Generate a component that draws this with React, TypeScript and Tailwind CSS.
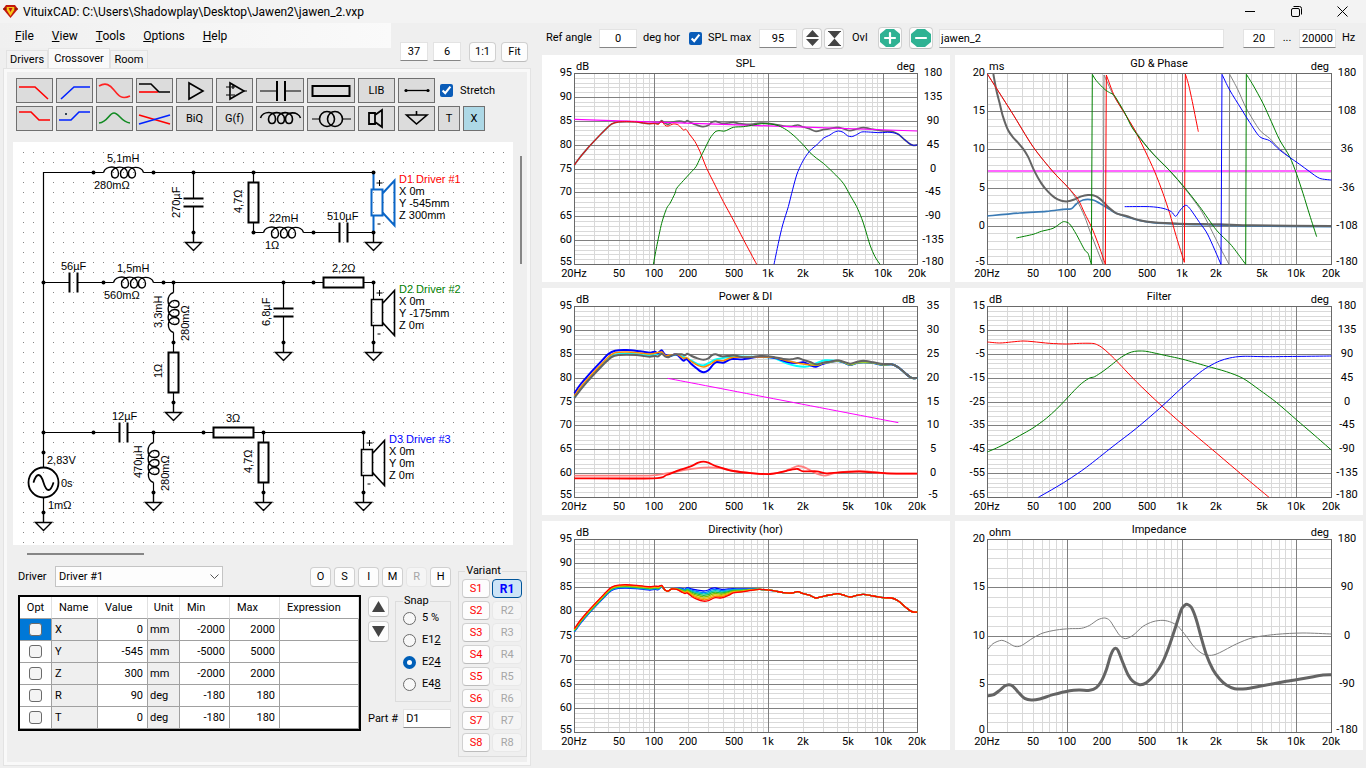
import React from "react";

type Pt = [number, number];

/* ------------------------------------------------------------------ */
/* Charts                                                              */
/* ------------------------------------------------------------------ */

function parse(points: string): Pt[] {
  return points
    .trim()
    .split(/\s+/)
    .map((p) => p.split(",").map(Number) as Pt);
}

/** Catmull-Rom spline through the sampled points. */
function smooth(points: string): string {
  const p = parse(points);
  let d = `M${p[0][0]} ${p[0][1]}`;
  for (let i = 0; i < p.length - 1; i++) {
    const a = p[Math.max(0, i - 1)];
    const b = p[i];
    const c = p[i + 1];
    const e = p[Math.min(p.length - 1, i + 2)];
    const k = 7;
    d += ` C${(b[0] + (c[0] - a[0]) / k).toFixed(1)} ${(b[1] + (c[1] - a[1]) / k).toFixed(1)} ${(c[0] - (e[0] - b[0]) / k).toFixed(1)} ${(c[1] - (e[1] - b[1]) / k).toFixed(1)} ${c[0]} ${c[1]}`;
  }
  return d;
}

interface Trace {
  color: string;
  width: number;
  segments: string[];
  shift?: number;
  wrap?: boolean;
}

interface ChartProps {
  title: string;
  leftUnit: string;
  rightUnit: string;
  left: string[];
  right: string[];
  plotWidth: number;
  plotHeight: number;
  traces: Trace[];
  traceTop: number;
}

const FREQS: [number, string][] = [
  [20, "20Hz"], [50, "50"], [100, "100"], [200, "200"], [500, "500"],
  [1000, "1k"], [2000, "2k"], [5000, "5k"], [10000, "10k"], [20000, "20k"],
];

const GRID_FREQS = [10, 100, 1000, 10000]
  .flatMap((d) => [1, 2, 3, 4, 5, 6, 7, 8, 9].map((m) => m * d))
  .filter((f) => f > 20 && f < 20000);

const isDecade = (f: number) => f === 100 || f === 1000 || f === 10000;

function Chart(c: ChartProps) {
  const x0 = 32;
  const y0 = 18;
  const x1 = x0 + c.plotWidth;
  const y1 = y0 + c.plotHeight;
  const fx = (f: number) => x0 + (c.plotWidth * Math.log10(f / 20)) / 3;
  const rows = c.left.length - 1;
  const fy = (i: number, n: number) => y0 + (c.plotHeight * i) / n;
  const snap = (v: number) => Math.round(v) + 0.5;
  const minor = Array.from({ length: rows * 5 + 1 }, (_, i) => i);
  const labelY = (i: number, n: number) => Math.round(fy(i, n)) + (i === n ? 1 : 3);
  return (
    <figure className="bg-white">
      <svg viewBox={`0 0 408 ${c.plotHeight + 36}`} className="block h-auto w-full font-[family-name:Roboto,'Liberation_Sans',sans-serif] text-[11px]" role="img" aria-label={c.title}>
        <g shapeRendering="crispEdges" strokeWidth="1">
          {minor.filter((i) => i % 5).map((i) => (
            <line key={i} x1={x0} x2={x1} y1={snap(fy(i, rows * 5))} y2={snap(fy(i, rows * 5))} stroke="#d9d9d9" />
          ))}
          {GRID_FREQS.filter((f) => !isDecade(f)).map((f) => (
            <line key={f} x1={snap(fx(f))} x2={snap(fx(f))} y1={y0} y2={y1} stroke="#d9d9d9" />
          ))}
          {minor.filter((i) => i % 5 === 0 && i > 0 && i < rows * 5).map((i) => (
            <line key={i} x1={x0} x2={x1} y1={snap(fy(i, rows * 5))} y2={snap(fy(i, rows * 5))} stroke="#808080" />
          ))}
          {GRID_FREQS.filter(isDecade).map((f) => (
            <line key={f} x1={snap(fx(f))} x2={snap(fx(f))} y1={y0} y2={y1} stroke="#808080" />
          ))}
          <rect x={x0 + 0.5} y={y0 + 0.5} width={c.plotWidth} height={c.plotHeight} fill="none" stroke="#696969" />
        </g>
        {/* Traces are sampled at three units per pixel. */}
        <g transform={`translate(-2 ${c.traceTop}) scale(0.33333)`} fill="none" strokeLinejoin="round">
          {c.traces.map((t, i) => (
            <g key={i} stroke={t.color} strokeWidth={t.width * 3} transform={`translate(0 ${t.shift ?? 0})`}>
              {t.segments.map((s, j) => (
                <path key={j} d={smooth(s)} />
              ))}
              {t.wrap &&
                t.segments.slice(1).map((s, j) => {
                  const prev = parse(t.segments[j]);
                  const end = prev[prev.length - 1];
                  const start = parse(s)[0];
                  return <path key={`w${j}`} d={`M${end[0]} ${end[1]}L${start[0]} ${start[1]}`} />;
                })}
            </g>
          ))}
        </g>
        <g fill="#000">
          <text x={x0 + c.plotWidth / 2} y="12" textAnchor="middle">{c.title}</text>
          <text x="34" y="15">{c.leftUnit}</text>
          <text x={x1 - 2} y="15" textAnchor="end">{c.rightUnit}</text>
          {c.left.map((l, i) => (
            <text key={i} x="30" y={labelY(i, rows)} textAnchor="end">{l}</text>
          ))}
          {c.right.map((l, i) => (
            <text key={i} x={x1 + 16} y={labelY(i, c.right.length - 1)} textAnchor="middle">{l}</text>
          ))}
          {FREQS.map(([f, l]) => (
            <text key={f} x={Math.round(fx(f))} y={y1 + 13} textAnchor="middle">{l}</text>
          ))}
        </g>
      </svg>
    </figure>
  );
}

const TAIL = "893,232 910,236 930,242 950,237 970,233 1000,238 1030,243 1055,244 1075,253 1095,270 1110,282 1120,286 1132,285";
const TOTAL = `103,345 120,322 140,298 160,276 180,255 200,235 215,222 235,216 260,215 290,216 310,219 330,221 345,219 355,220 365,212 375,220 385,223 395,217 410,214 425,214 435,217 442,212 455,219 470,225 490,230 505,226 515,217 527,214 545,220 565,219 580,217 600,221 620,223 640,222 660,219 700,222 730,228 755,229 773,225 790,231 810,237 828,244 850,239 870,236 ${TAIL}`;
const HEAD = "103,345 120,322 140,298 160,276 180,255 200,235 215,222 235,216 260,215 290,216 310,219 330,221";

const SPL: Trace[] = [
  { color: "#646464", width: 1.7, segments: [TOTAL] },
  { color: "#ff00ff", width: 1.2, segments: ["103,208 1132,243"] },
  { color: "#ff0000", width: 1, segments: [`${HEAD} 345,221 355,223 365,214 375,226 385,228 400,222 415,225 430,240 438,238 450,255 465,275 480,305 500,355 520,395 550,455 580,510 610,568 650,643`] },
  { color: "#007f00", width: 1, segments: ["340,643 350,590 365,520 380,475 390,460 405,430 410,415 430,392 450,370 468,350 480,325 495,295 510,265 525,246 537,242 555,243 580,232 610,230 640,225 665,221 690,222 715,227 740,240 765,260 790,285 810,308 830,325 850,340 880,368 910,400 930,435 950,470 965,505 975,535 990,585 1005,620 1020,643"] },
  { color: "#0000ff", width: 1, segments: ["702,643 715,580 728,525 745,470 755,430 770,375 785,340 800,315 815,297 830,285 850,265 870,255 880,248 895,243 910,247 922,257 935,260 950,254 965,246 985,246 1020,248 1050,247 1075,253 1095,270 1110,282 1120,286 1132,285"] },
];

const GD: Trace[] = [
  { color: "#ff66ff", width: 2, segments: ["105,363 1134,363"] },
  { color: "#3a7ab4", width: 1.7, segments: ["103,498 200,489 280,484 330,478 355,476 370,462 390,450 420,450 440,460 470,478 490,490 540,506 600,518 700,523 800,525 900,528 1135,530"] },
  { color: "#646464", width: 2, segments: ["121,72 130,120 140,160 150,200 165,240 180,262 195,278 210,296 225,320 245,365 265,400 285,425 305,443 325,452 345,454 365,448 385,439 405,435 420,436 435,442 450,455 470,475 490,490 520,498 560,511 600,517 680,521 800,523 900,526 1135,528"] },
  { color: "#808080", width: 1, wrap: true, segments: [
    "103,72 175,185 240,290 300,365 345,412 370,448 395,500 415,555 450,643",
    "453,75 480,133 515,190 550,247 600,312 650,362 695,415 740,475 765,520 800,590 828,643",
    "830,73 855,120 880,175 920,240 950,265 975,292 1010,322",
  ] },
  { color: "#ff0000", width: 1, wrap: true, segments: [
    "103,72 175,185 240,290 300,365 345,412 375,448 395,490 415,530 435,580 457,643",
    "460,75 485,140 515,190 545,240 575,300 605,365 630,430 650,490 670,560 694,637",
    "697,72 707,105 718,155 728,205 736,245",
  ] },
  { color: "#007f00", width: 1, wrap: true, segments: [
    "190,564 240,553 265,544 300,535 325,518 335,515 350,522 370,553 395,600 405,610 415,643",
    "418,73 430,92 455,118 470,128 485,138 515,188 540,237 590,300 650,362 695,413 740,470 790,540 830,580 850,605 878,643",
    "880,73 900,105 930,160 955,215 980,270 1010,320 1030,370 1050,430 1070,495 1091,560",
  ] },
  { color: "#0000ff", width: 1, wrap: true, segments: [
    "515,470 590,470 630,475 655,485 668,499 682,480 697,466 710,475 740,518 765,555 804,643",
    "807,73 830,120 865,177 890,217 920,260 950,272 980,300 1010,322 1040,343 1070,365 1100,385 1135,390",
  ] },
];

const P_TAIL = "893,228 910,232 930,240 950,234 970,232 1000,234 1030,240 1055,238 1075,247 1095,264 1110,276 1120,280 1132,279";

const POWER: Trace[] = [
  { color: "#ff8080", width: 1.8, segments: ["103,572 300,572 350,570 400,562 440,554 490,548 540,549 580,558 650,566 690,567 730,560 755,550 775,543 800,550 830,566 855,572 880,565 920,560 960,558 1040,565 1132,566"] },
  { color: "#ff0000", width: 1.8, segments: ["103,580 340,580 380,570 415,556 450,545 475,533 490,530 505,533 530,544 580,558 640,565 690,567 720,562 755,554 773,552 790,559 830,559 860,565 900,562 960,560 1040,565 1132,566"] },
  { color: "#ff00ff", width: 1, segments: ["383,280 1075,413"] },
  { color: "#00ffff", width: 2, segments: [`103,338 120,314 150,279 180,247 205,221 225,209 260,206 300,208 330,211 345,210 365,204 378,214 410,209 430,216 455,228 475,238 492,241 510,232 530,223 580,215 650,216 700,218 740,235 770,243 795,245 815,241 835,232 855,226 ${P_TAIL}`] },
  { color: "#0000ff", width: 2, segments: [`103,325 120,300 150,265 180,233 205,207 225,197 260,195 300,199 330,203 345,200 353,205 365,196 375,209 390,213 405,208 415,212 430,227 440,222 455,238 470,250 480,258 492,262 505,256 520,238 530,231 550,233 575,222 610,223 650,216 680,216 710,220 740,230 770,234 790,232 810,240 828,245 850,236 ${P_TAIL}`] },
  { color: "#ff8c00", width: 1.5, segments: [`103,334 120,309 150,274 180,242 205,216 225,203 260,201 300,204 330,207 345,205 365,201 378,212 410,208 430,220 440,218 455,230 475,242 492,246 510,238 530,226 550,227 580,217 650,216 700,217 740,227 790,237 828,241 850,234`] },
  { color: "#9acd32", width: 1.6, segments: [`810,236 828,240 850,234 870,232 ${P_TAIL}`] },
  { color: "#646464", width: 2, shift: -6, segments: [TOTAL] },
];

const DIR_END = "660,214 700,218 730,224 755,225 773,221 790,227 810,232 828,240 850,235 870,231 893,227 910,231 930,237 950,232 970,229 1000,234 1030,239 1055,240 1075,249 1095,266 1110,278 1120,282 1132,282";
const DIR_COLORS = ["#0000ff", "#0080ff", "#00c0c0", "#20c040", "#80c000", "#e0c000", "#ff8000", "#ff0000"];

const DIRECTIVITY: Trace[] = DIR_COLORS.map((color, i) => {
  const up = i * 1.4;
  const dip = i * 4.6;
  return {
    color,
    width: 1.3,
    segments: [
      `103,${342 - up} 120,${318 - up} 140,${294 - up} 160,${272 - up} 180,${251 - up} 200,${230 - up} 215,${217 - up} 235,${211 - up} 260,${210 - up} 290,${212 - up} 310,${214 - up} 330,${216 - up} 345,${214 - up} 355,${215 - up} 365,${207 - up / 2} 375,${216} 385,${219} 395,${213} 410,${211 + dip * 0.1} 425,${211 + dip * 0.35} 435,${214 + dip * 0.4} 442,${209 + dip * 0.5} 455,${213 + dip * 0.7} 470,${216 + dip * 0.85} 490,${219 + dip * 0.95} 505,${216 + dip} 515,${211 + dip} 527,${210 + dip * 0.9} 545,${214 + dip * 0.8} 565,${213 + dip * 0.6} 580,${212 + dip * 0.4} 600,${213 + dip * 0.3} 620,${213 + dip * 0.2} 640,${213 + dip * 0.1} ${DIR_END}`,
    ],
  };
});

const FILTER: Trace[] = [
  { color: "#ff0000", width: 1, segments: ["103,171 140,174 175,171 210,168 240,170 290,175 340,177 380,175 415,175 430,178 450,190 485,222 550,290 620,357 687,417 790,504 870,572 948,637"] },
  { color: "#007f00", width: 1, segments: ["103,501 150,480 200,452 240,429 280,400 310,373 340,342 370,310 390,292 410,279 425,275 450,259 475,240 500,220 525,205 545,199 565,198 585,200 640,212 690,223 760,243 820,260 870,280 920,315 970,352 1030,404 1080,447 1135,495"] },
  { color: "#0000ff", width: 1, segments: ["256,637 300,612 343,586 400,547 480,484 550,430 620,370 687,308 740,263 770,243 800,228 830,219 870,214 950,215 1135,213"] },
];

const IMPEDANCE: Trace[] = [
  { color: "#808080", width: 1, segments: ["103,396 120,377 145,367 165,374 185,385 205,383 240,360 270,345 310,336 350,332 385,331 410,322 435,305 455,300 470,307 485,330 500,352 517,362 540,352 570,325 600,311 630,307 655,313 675,325 700,355 725,388 750,408 775,412 800,404 850,378 900,359 970,349 1050,345 1135,348"] },
  { color: "#646464", width: 3, segments: ["103,533 120,531 140,517 155,504 168,500 180,505 200,527 215,541 235,546 260,543 300,530 350,518 380,516 410,517 430,509 445,490 460,455 472,415 480,397 487,391 495,397 510,435 525,470 540,490 560,500 580,494 605,470 630,430 650,380 670,320 685,275 695,262 703,259 715,268 730,305 745,360 760,410 780,455 800,483 820,501 845,512 880,512 920,505 1000,490 1060,480 1110,471 1135,470"] },
];

const DB_AXIS = ["95", "90", "85", "80", "75", "70", "65", "60", "55"];
const DEG_AXIS = ["180", "135", "90", "45", "0", "-45", "-90", "-135", "-180"];

function Charts() {
  return (
    <div className="grid grid-cols-2 gap-x-[5px] gap-y-1.5">
      <Chart title="SPL" leftUnit="dB" rightUnit="deg" left={DB_AXIS} right={DEG_AXIS} plotWidth={343} plotHeight={191} traces={SPL} traceTop={-5} />
      <Chart title="GD & Phase" leftUnit="ms" rightUnit="deg" left={["20", "15", "10", "5", "0", "-5"]} right={["180", "108", "36", "-36", "-108", "-180"]} plotWidth={344} plotHeight={191} traces={GD} traceTop={-5} />
      <Chart title="Power & DI" leftUnit="dB" rightUnit="dB" left={DB_AXIS} right={["35", "30", "25", "20", "15", "10", "5", "0", "-5"]} plotWidth={343} plotHeight={191} traces={POWER} traceTop={-3} />
      <Chart title="Filter" leftUnit="dB" rightUnit="deg" left={["15", "5", "-5", "-15", "-25", "-35", "-45", "-55", "-65"]} right={DEG_AXIS} plotWidth={344} plotHeight={191} traces={FILTER} traceTop={-3} />
      <Chart title="Directivity (hor)" leftUnit="dB" rightUnit="" left={DB_AXIS} right={[]} plotWidth={343} plotHeight={193} traces={DIRECTIVITY} traceTop={-3} />
      <Chart title="Impedance" leftUnit="ohm" rightUnit="deg" left={["20", "15", "10", "5", "0"]} right={["180", "90", "0", "-90", "-180"]} plotWidth={344} plotHeight={193} traces={IMPEDANCE} traceTop={-3} />
    </div>
  );
}

/* ------------------------------------------------------------------ */
/* Schematic                                                           */
/* ------------------------------------------------------------------ */

const COIL = "M-20 0C-18 -7 -5 -8 -5 1C-5 7 -12 7 -12 1C-12 -7 4 -8 4 1C4 7 -3 7 -3 1C-3 -7 12 -8 12 1C12 7 5 7 5 1C5 -7 18 -7 20 0";

function Coil({ x, y, vertical }: { x: number; y: number; vertical?: boolean }) {
  return (
    <g transform={`translate(${x} ${y})${vertical ? " rotate(90) scale(1 -1) translate(0 0)" : ""}`}>
      <path d={vertical ? "M-30 0H-20M20 0H30" : "M-30 0H-20M20 0H30"} />
      <path d={COIL} strokeWidth="1.4" transform={vertical ? "scale(1 1)" : undefined} />
    </g>
  );
}

function Cap({ x, y, vertical, lead = 30 }: { x: number; y: number; vertical?: boolean; lead?: number }) {
  return (
    <g transform={`translate(${x} ${y})${vertical ? " rotate(90)" : ""}`}>
      <path d={`M${-lead} 0H-4M4 0H${lead}`} />
      <path d="M-4 -10V10M4 -10V10" strokeWidth="2" />
    </g>
  );
}

function Res({ x, y, vertical }: { x: number; y: number; vertical?: boolean }) {
  return (
    <g transform={`translate(${x} ${y})${vertical ? " rotate(90)" : ""}`}>
      <path d="M-30 0H-20M20 0H30" />
      <rect x="-20" y="-5" width="40" height="10" strokeWidth="2" />
    </g>
  );
}

function Ground({ x, y }: { x: number; y: number }) {
  return <path d={`M${x} ${y}v10M${x - 8} ${y + 10}h16l-8 8z`} strokeWidth="1.4" />;
}

function Speaker({ x, y, color, selected }: { x: number; y: number; color: string; selected?: boolean }) {
  return (
    <g stroke={color} transform={`translate(${x} ${y})`}>
      <path d="M0 0V17M0 43V60" strokeWidth={selected ? 2 : 1.2} />
      <path d="M-2 17H9V43H-2ZM9 21L21 8V53L9 40" strokeWidth={selected ? 2 : 1.6} />
      <path d="M3 10.5H9M6 7.5V13.5M4 51.5H7" stroke="#000" strokeWidth="1" />
    </g>
  );
}

const DOTS: Pt[] = [
  [93, 172], [153, 172], [193, 172], [253, 172], [373, 172], [193, 232], [253, 232], [313, 232], [373, 232],
  [43, 282], [103, 282], [163, 282], [173, 282], [283, 282], [313, 282], [373, 282], [173, 342], [283, 342], [373, 342], [173, 402],
  [43, 432], [93, 432], [153, 432], [203, 432], [263, 432], [363, 432], [43, 452], [43, 512], [153, 492], [263, 492], [363, 492],
];

const LABELS: [number, number, string][] = [
  [107, 162, "5,1mH"], [94, 189, "280mΩ"], [269, 222, "22mH"], [265, 249, "1Ω"], [327, 220, "510µF"],
  [61, 270, "56µF"], [117, 272, "1,5mH"], [104, 299, "560mΩ"], [332, 272, "2,2Ω"],
  [112, 420, "12µF"], [226, 422, "3Ω"], [47, 464, "2,83V"], [61, 487, "0s"], [48, 509, "1mΩ"],
];

const VLABELS: [number, number, string][] = [
  [180, 218, "270µF"], [242, 213, "4,7Ω"], [162, 328, "3,3mH"], [189, 341, "280mΩ"], [162, 378, "1Ω"],
  [270, 326, "6,8µF"], [142, 478, "470µH"], [169, 491, "280mΩ"], [252, 473, "4,7Ω"],
];

const DRIVERS: { x: number; y: number; color: string; name: string; lines: string[] }[] = [
  { x: 399, y: 183, color: "#ff0000", name: "D1 Driver #1", lines: ["X 0m", "Y -545mm", "Z 300mm"] },
  { x: 399, y: 293, color: "#007f00", name: "D2 Driver #2", lines: ["X 0m", "Y -175mm", "Z 0m"] },
  { x: 389, y: 443, color: "#0000ff", name: "D3 Driver #3", lines: ["X 0m", "Y 0m", "Z 0m"] },
];

function Schematic() {
  return (
    <svg viewBox="13 142 500 403" className="block h-auto min-w-0 flex-1 bg-white font-[family-name:'Liberation_Sans',Arial,sans-serif] text-[11px]" role="img" aria-label="Crossover schematic">
      <defs>
        <pattern id="dots" x="13" y="142" width="10" height="10" patternUnits="userSpaceOnUse">
          <rect x="0" y="0" width="1" height="1" fill="#858585" />
        </pattern>
      </defs>
      <rect x="23" y="152" width="484" height="391" fill="url(#dots)" />
      <g transform="translate(0.5 0.5)" fill="none" stroke="#000" strokeWidth="1.2">
        <path d="M93 172H43V467M153 172H373M43 282H53M163 282H313M43 432H93M153 432H203M263 432H363M43 497V512" />
        <Coil x={123} y={172} />
        <Cap x={193} y={202} vertical />
        <Ground x={193} y={232} />
        <Res x={253} y={202} vertical />
        <Coil x={283} y={232} />
        <Cap x={343} y={232} />
        <Ground x={373} y={232} />
        <Speaker x={373} y={172} color="#0a66c8" selected />

        <Cap x={73} y={282} />
        <Coil x={133} y={282} />
        <Coil x={173} y={312} vertical />
        <Res x={173} y={372} vertical />
        <Ground x={173} y={402} />
        <Cap x={283} y={312} vertical />
        <Ground x={283} y={342} />
        <Res x={343} y={282} />
        <Speaker x={373} y={282} color="#000" />
        <Ground x={373} y={342} />

        <Cap x={123} y={432} />
        <Coil x={153} y={462} vertical />
        <Ground x={153} y={492} />
        <Res x={233} y={432} />
        <Res x={263} y={462} vertical />
        <Ground x={263} y={492} />
        <Speaker x={363} y={432} color="#000" />
        <Ground x={363} y={492} />

        <circle cx="43" cy="482" r="15" strokeWidth="1.8" />
        <path d="M33 482C36 472 40 472 43 482S50 492 53 482" strokeWidth="1.8" />
        <Ground x={43} y={512} />
      </g>
      {DOTS.map(([x, y]) => (
        <circle key={`${x}-${y}`} cx={x + 0.5} cy={y + 0.5} r="2" />
      ))}
      {LABELS.map(([x, y, t]) => (
        <text key={`${x}-${y}`} x={x} y={y}>{t}</text>
      ))}
      {VLABELS.map(([x, y, t]) => (
        <text key={`${x}-${y}`} transform={`translate(${x} ${y}) rotate(-90)`}>{t}</text>
      ))}
      {DRIVERS.map((d) => (
        <g key={d.name}>
          <text x={d.x} y={d.y} fill={d.color}>{d.name}</text>
          {d.lines.map((l, i) => (
            <text key={l} x={d.x} y={d.y + 12 * (i + 1)}>{l}</text>
          ))}
        </g>
      ))}
    </svg>
  );
}

/* ------------------------------------------------------------------ */
/* Toolbar of parts                                                    */
/* ------------------------------------------------------------------ */

function Tool({ label, wide, children }: { label: string; wide?: boolean; children: React.ReactNode }) {
  return (
    <button type="button" aria-label={label} className={`flex h-[25px] items-center justify-center border border-[#707070] bg-[#dcdcdc] ${wide ? "w-12" : "w-[37px]"}`}>
      {children}
    </button>
  );
}

function Icon({ w = 35, children }: { w?: number; children: React.ReactNode }) {
  return (
    <svg width={w} height="23" viewBox={`0 0 ${w} 23`} fill="none" stroke="#000" strokeWidth="1.6">
      {children}
    </svg>
  );
}

function PartsToolbar() {
  return (
    <div className="flex flex-col gap-[3px] pt-1.5 pl-[9px]">
      <div className="flex gap-[3px]">
        <Tool label="Low pass"><Icon><path d="M2 8H18L31 20" stroke="#f00" /></Icon></Tool>
        <Tool label="High pass"><Icon><path d="M4 20L17 8H33" stroke="#02f" /></Icon></Tool>
        <Tool label="Shelf"><Icon><path d="M2 7C9 3 13 6 17 11S24 21 33 17" stroke="#f22" /></Icon></Tool>
        <Tool label="Low shelf"><Icon><path d="M2 13H21" stroke="#f00" /><path d="M2 5H14L22 13H33" /></Icon></Tool>
        <Tool label="Buffer"><Icon><path d="M12 4V20L26 12Z" /></Icon></Tool>
        <Tool label="Operational amplifier"><Icon><path d="M13 4V20L27 12Z" /><path d="M9 8H13M9 16H13M27 12H30M14 8H18M16 6V10M14 16H18" strokeWidth="1.2" /></Icon></Tool>
        <Tool wide label="Capacitor"><Icon w={46}><path d="M3 12H20M28 12H44" strokeWidth="1.2" /><path d="M20 2V22M28 2V22" strokeWidth="2" /></Icon></Tool>
        <Tool wide label="Resistor"><Icon w={46}><rect x="4.5" y="7" width="37" height="10" strokeWidth="2" /></Icon></Tool>
        <Tool label="Library">LIB</Tool>
        <Tool label="Wire"><Icon><path d="M7 11.5H29" strokeWidth="1.3" /><circle cx="7" cy="11.5" r="1.6" fill="#000" stroke="none" /><circle cx="29" cy="11.5" r="1.6" fill="#000" stroke="none" /></Icon></Tool>
        <label className="ml-0.5 flex items-center gap-[7px]">
          <input type="checkbox" defaultChecked className="size-[13px] accent-[#0a5cb8]" />
          Stretch
        </label>
      </div>
      <div className="flex gap-[3px]">
        <Tool label="Attenuator shelf"><Icon><path d="M2 5H14L22 13H33" stroke="#f00" /></Icon></Tool>
        <Tool label="High shelf"><Icon><path d="M2 13H14L22 5H33" stroke="#02f" /><rect x="8" y="6" width="2" height="2" fill="#345" stroke="none" /></Icon></Tool>
        <Tool label="Peak"><Icon><path d="M2 16C11 15 12 6 17 6S24 15 33 16" stroke="#118a22" /></Icon></Tool>
        <Tool label="Crossing"><Icon><path d="M2 8L33 17" stroke="#f00" /><path d="M2 17L33 8" stroke="#02f" /></Icon></Tool>
        <Tool label="Biquad">BiQ</Tool>
        <Tool label="Transfer function">G(f)</Tool>
        <Tool wide label="Inductor"><Icon w={46}><g transform="translate(23.5 11)"><path d={COIL} /></g></Icon></Tool>
        <Tool wide label="Transformer"><Icon w={46}><circle cx="19" cy="12" r="7.5" /><circle cx="27" cy="12" r="7.5" /><path d="M4 12H11.500M34.500 12H43" strokeWidth="1.2" /></Icon></Tool>
        <Tool label="Speaker"><Icon><path d="M10 6H16V17H10ZM16 8L23 3V20L16 15" strokeWidth="1.8" /></Icon></Tool>
        <Tool label="Ground"><Icon><path d="M17.500 4V8M7.500 8H28L17.500 17Z" /></Icon></Tool>
        <button type="button" className="h-[25px] w-[22px] border border-[#707070] bg-[#dcdcdc]">T</button>
        <button type="button" className="h-[25px] w-[22px] border border-[#707070] bg-[#add8e6]">X</button>
      </div>
    </div>
  );
}

/* ------------------------------------------------------------------ */
/* Part editor                                                         */
/* ------------------------------------------------------------------ */

const btn = "rounded-[4px] border border-[#d0d0d0] border-b-[#bcbcbc] bg-[#fdfdfd]";
const field = "border border-[#e3e3e3] border-b-[#868686] bg-white outline-none";

const ROWS = [
  ["X", "0", "mm", "-2000", "2000"],
  ["Y", "-545", "mm", "-5000", "5000"],
  ["Z", "300", "mm", "-2000", "2000"],
  ["R", "90", "deg", "-180", "180"],
  ["T", "0", "deg", "-180", "180"],
];

const cell = "h-[22px] border-r border-b border-[#a0a0a0] p-0";
const head = "h-[22px] border-r border-b border-r-[#e0e0e0] border-b-[#a0a0a0] p-0 font-normal";

function ParamTable() {
  return (
    <table className="w-[343px] table-fixed border-separate border-spacing-0 border-2 border-black bg-white">
      <colgroup>
        <col className="w-8" /><col className="w-[46px]" /><col className="w-[50px]" /><col className="w-8" />
        <col className="w-[50px]" /><col className="w-[50px]" /><col />
      </colgroup>
      <thead>
        <tr>
          <th className={head}>Opt</th>
          <th className={`${head} pl-[7px] text-left`}>Name</th>
          <th className={`${head} pl-[7px] text-left`}>Value</th>
          <th className={head}>Unit</th>
          <th className={`${head} pl-[7px] text-left`}>Min</th>
          <th className={`${head} pl-[7px] text-left`}>Max</th>
          <th className={`${head} pl-[7px] text-left`}>Expression</th>
        </tr>
      </thead>
      <tbody>
        {ROWS.map((r, i) => (
          <tr key={r[0]}>
            <td className={`${cell} ${i === 0 ? "bg-[#0078d7]" : ""}`}>
              <input type="checkbox" aria-label={`Optimize ${r[0]}`} className="mx-auto block size-[13px] appearance-none rounded-[3px] border border-[#6b6b6b] bg-[#f4f4f4]" />
            </td>
            <td className={`${cell} bg-[#efefef] pl-[3px]`}>{r[0]}</td>
            <td className={`${cell} pr-1 text-right`}>{r[1]}</td>
            <td className={`${cell} bg-[#efefef] pl-0.5`}>{r[2]}</td>
            <td className={`${cell} pr-1 text-right`}>{r[3]}</td>
            <td className={`${cell} pr-1 text-right`}>{r[4]}</td>
            <td className={cell}></td>
          </tr>
        ))}
      </tbody>
    </table>
  );
}

const SNAPS: [string, string][] = [["5 %", ""], ["E1", "2"], ["E2", "4"], ["E4", "8"]];

function Editor() {
  return (
    <div className="flex items-start pl-[11px]">
      <div className="flex w-[434px] flex-col gap-2 pt-1.5">
        <div className="flex items-center">
          <label htmlFor="driver" className="w-[37px]">Driver</label>
          <div className="relative">
            <select id="driver" className="h-[21px] w-[168px] appearance-none border border-[#c4c4c4] bg-[#fdfdfd] pl-[3px]">
              <option>Driver #1</option>
            </select>
            <svg className="pointer-events-none absolute top-2 right-1" width="9" height="6" viewBox="0 0 9 6" fill="none" stroke="#555"><path d="M.5 .5L4.500 4.500L8.500 .5" /></svg>
          </div>
          <div className="ml-auto flex gap-[3px]">
            {["O", "S", "I", "M", "R", "H"].map((b) => (
              <button key={b} type="button" disabled={b === "R"} className={`h-5 w-[21px] disabled:border-[#e6e6e6] disabled:bg-[#f5f5f5] disabled:text-[#a6a6a6] ${btn}`}>{b}</button>
            ))}
          </div>
        </div>
        <div className="flex items-start gap-[7px]">
          <ParamTable />
          <div className="flex flex-1 flex-col gap-[7px]">
            <div className="flex items-start gap-1.5">
              <div className="flex flex-col gap-1 pt-px">
                <button type="button" aria-label="Previous part" className={`flex h-[21px] w-[21px] items-center justify-center ${btn}`}>
                  <svg width="13" height="11" viewBox="0 0 13 11"><path d="M6.500 0L13 11H0Z" fill="#444" /></svg>
                </button>
                <button type="button" aria-label="Next part" className={`flex h-[21px] w-[21px] items-center justify-center ${btn}`}>
                  <svg width="13" height="11" viewBox="0 0 13 11"><path d="M6.500 11L13 0H0Z" fill="#444" /></svg>
                </button>
              </div>
              <fieldset className="h-[107px] flex-1 border border-[#dcdcdc] pl-[7px]">
                <legend className="px-px leading-3">Snap</legend>
                {SNAPS.map(([a, b], i) => (
                  <label key={a} className="flex h-[22px] items-center gap-1.5">
                    <input type="radio" name="snap" defaultChecked={i === 2} className="size-[13px] appearance-none rounded-full border border-[#6b6b6b] bg-[#f8f8f8] checked:border-4 checked:border-[#005fb8] checked:bg-white" />
                    <span>{a}<u>{b}</u></span>
                  </label>
                ))}
              </fieldset>
            </div>
            <div className="flex items-center justify-between">
              <label htmlFor="part">Part #</label>
              <input id="part" defaultValue="D1" className={`h-[19px] w-12 px-0.5 ${field}`} />
            </div>
          </div>
        </div>
      </div>
      <fieldset className="mt-[5px] ml-[7px] h-[192px] w-[69px] border border-[#dcdcdc] pl-[3px]">
        <legend className="ml-[3px] px-px leading-3">Variant</legend>
        <div className="-mt-px grid grid-cols-[28px_30px] gap-x-0.5 gap-y-[3px] pt-[3px]">
          {[1, 2, 3, 4, 5, 6, 7, 8].map((n) => (
            <React.Fragment key={n}>
              <button type="button" className={`h-[19px] text-[#f00] ${btn}`}>S{n}</button>
              {n === 1 ? (
                <button type="button" className="h-[19px] rounded-[4px] border border-[#005499] bg-[#cce4f7] text-[12px] leading-4 font-bold text-[#00f]">R1</button>
              ) : (
                <button type="button" disabled className="h-[19px] rounded-[4px] border border-[#e8e8e8] bg-[#f5f5f5] text-[#a6a6a6]">R{n}</button>
              )}
            </React.Fragment>
          ))}
        </div>
      </fieldset>
    </div>
  );
}

/* ------------------------------------------------------------------ */
/* Window                                                              */
/* ------------------------------------------------------------------ */

function TitleBar() {
  return (
    <header className="flex h-[23px] items-center bg-[#f3f3f3] pr-[18px] pl-[3px] text-[12px]">
      <svg width="15" height="13" viewBox="0 0 15 13">
        <path d="M3 0H12L15 4L7.500 13L0 4Z" fill="#c4180c" />
        <path d="M4 2H11L12 4L7.500 11L3 4Z" fill="#f5c518" />
        <path d="M5.500 3H9.500L7.500 7Z" fill="#c4180c" />
        <path d="M0 4H4M11 4H15" stroke="#7a0d05" />
      </svg>
      <h1 className="ml-[5px]">VituixCAD: C:\Users\Shadowplay\Desktop\Jawen2\jawen_2.vxp</h1>
      <div className="ml-auto flex gap-[35px]">
        <button type="button" aria-label="Minimize"><svg width="11" height="11" viewBox="0 0 11 11" stroke="#000"><path d="M0 5.500H10" /></svg></button>
        <button type="button" aria-label="Restore"><svg width="11" height="11" viewBox="0 0 11 11" fill="none" stroke="#000"><rect x=".5" y="2.500" width="8" height="8" rx="1.500" /><path d="M2.500 .5H8.500a2 2 0 0 1 2 2V8.500" /></svg></button>
        <button type="button" aria-label="Close"><svg width="11" height="11" viewBox="0 0 11 11" stroke="#000"><path d="M.5 .5L10.500 10.500M10.500 .5L.5 10.500" /></svg></button>
      </div>
    </header>
  );
}

const MENUS = ["File", "View", "Tools", "Options", "Help"];

function LeftHeader() {
  return (
    <div className="flex h-[46px] pr-2.5">
      <div className="flex flex-col">
        <nav className="flex h-[25px] w-[391px] items-center gap-[18px] bg-linear-to-r from-[#f0f0f0] to-[#fafafa] pl-[15px] text-[12px]">
          {MENUS.map((m) => (
            <button key={m} type="button"><u>{m[0]}</u>{m.slice(1)}</button>
          ))}
        </nav>
        <div role="tablist" className="flex flex-1 items-end pl-1.5">
          <button role="tab" type="button" className="h-[19px] w-[42px] border border-b-0 border-[#e2e2e2] bg-[#f2f2f2]">Drivers</button>
          <button role="tab" type="button" aria-selected="true" className="h-[21px] w-[62px] border border-b-0 border-[#e2e2e2] bg-[#fafafa]">Crossover</button>
          <button role="tab" type="button" className="h-[19px] w-[38px] border border-b-0 border-[#e2e2e2] bg-[#f2f2f2]">Room</button>
        </div>
      </div>
      <div className="ml-auto flex items-start gap-[5px] pt-[19px]">
        <input aria-label="Columns" defaultValue="37" className={`h-[19px] w-7 text-center ${field}`} />
        <input aria-label="Rows" defaultValue="6" className={`mr-[3px] h-[19px] w-7 text-center ${field}`} />
        <button type="button" className={`h-5 w-[27px] ${btn}`}>1:1</button>
        <button type="button" className={`h-5 w-[27px] ${btn}`}>Fit</button>
      </div>
    </div>
  );
}

function OverlayButton({ label, d }: { label: string; d: string }) {
  return (
    <button type="button" aria-label={label} className={`flex h-[22px] w-6 items-center justify-center ${btn}`}>
      <svg width="20" height="18" viewBox="0 0 20 18"><path d="M6 0H14L20 5V13L14 18H6L0 13V5Z" fill="#2fb293" /><path d={d} stroke="#fff" strokeWidth="2.200" strokeLinecap="round" /></svg>
    </button>
  );
}

function RightHeader() {
  return (
    <div className="flex h-8 items-center pr-1.5 pb-0.5 pl-1">
      <label htmlFor="ref" className="w-[53px]">Ref angle</label>
      <input id="ref" defaultValue="0" className={`h-[19px] w-[38px] text-center ${field}`} />
      <span className="ml-1.5 w-[46px]">deg hor</span>
      <label className="flex w-[70px] items-center gap-1.5 whitespace-nowrap">
        <input type="checkbox" defaultChecked className="size-[13px] accent-[#0a5cb8]" />
        SPL max
      </label>
      <input aria-label="SPL max value" defaultValue="95" className={`h-[19px] w-[38px] text-center ${field}`} />
      <button type="button" aria-label="Expand scale" className={`ml-[5px] flex h-[21px] w-5 items-center justify-center ${btn}`}>
        <svg width="13" height="16" viewBox="0 0 13 16" fill="#444"><path d="M6.500 0L13 7H0ZM6.500 16L13 9H0Z" /></svg>
      </button>
      <button type="button" aria-label="Compress scale" className={`ml-0.5 flex h-[21px] w-5 items-center justify-center ${btn}`}>
        <svg width="13" height="15" viewBox="0 0 13 15" fill="#444"><path d="M0 0H13L6.500 7.500ZM0 15H13L6.500 7.500Z" /><path d="M0 .5H13M0 14.500H13" stroke="#444" /></svg>
      </button>
      <span className="mx-2 w-[18px]">Ovl</span>
      <OverlayButton label="Add overlay" d="M10 4V14M5 9H15" />
      <span className="w-[7px]" />
      <OverlayButton label="Remove overlay" d="M5 9H15" />
      <input aria-label="Overlay name" defaultValue="jawen_2" className={`mr-[19px] ml-1.5 h-[19px] min-w-0 flex-1 px-px ${field}`} />
      <input aria-label="Minimum frequency" defaultValue="20" className={`h-[19px] w-8 text-center ${field}`} />
      <span className="w-6 text-center">...</span>
      <input aria-label="Maximum frequency" defaultValue="20000" className={`h-[19px] w-[37px] text-center ${field}`} />
      <span className="ml-1.5 w-[15px]">Hz</span>
    </div>
  );
}

export default function App() {
  return (
    <div className="flex min-h-screen flex-col bg-[#efefef] font-[family-name:Roboto,'Liberation_Sans',sans-serif] text-[11px] leading-[14px] text-black">
      <TitleBar />
      <div className="flex flex-1">
        <section className="flex w-[538px] shrink-0 flex-col pb-[3px]">
          <LeftHeader />
          <div className="mr-2 ml-1 flex flex-1 flex-col gap-[11px] border-[3px] border-[#f9f9f9] outline outline-[#e3e3e3]">
            <PartsToolbar />
            <div>
              <div className="flex pl-1.5">
                <Schematic />
                <div className="w-3.5 shrink-0 pt-[14px] pl-[7px]">
                  <div className="h-[108px] w-0.5 bg-[#868686]" />
                </div>
              </div>
              <div className="h-[15px] pt-2 pl-5">
                <div className="h-0.5 w-[117px] bg-[#868686]" />
              </div>
              <Editor />
            </div>
          </div>
        </section>
        <main className="min-w-0 flex-1 pr-[3px] pl-1">
          <RightHeader />
          <Charts />
        </main>
      </div>
    </div>
  );
}
